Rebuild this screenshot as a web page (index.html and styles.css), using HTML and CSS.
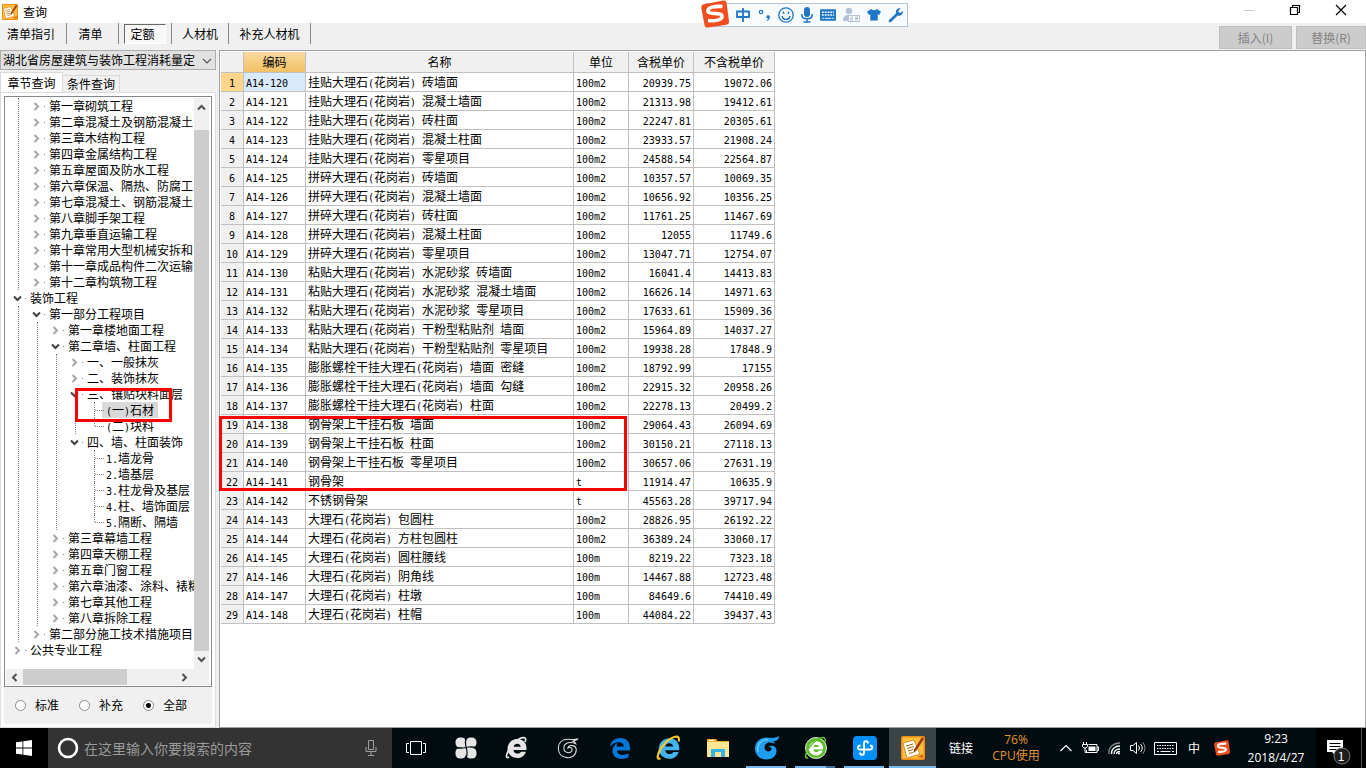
FILE: index.html
```html
<!DOCTYPE html>
<html lang="zh-CN">
<head>
<meta charset="utf-8">
<title>查询</title>
<link rel="stylesheet" href="styles.css">
</head>
<body>
<header class="titlebar">
  <svg class="app-icon" viewBox="0 0 24 24"><use href="#note"/></svg>
  <h1 class="title">查询</h1>
  <div class="window-buttons">
    <button class="win-btn" aria-label="最小化"><svg viewBox="0 0 12 12"><path d="M1 6.500h10" stroke="#c8c8c8" fill="none"/></svg></button>
    <button class="win-btn" aria-label="还原"><svg viewBox="0 0 12 12"><path d="M1.500 3.500h7v7h-7zM3.500 3v-1.500h7v7h-1.500" stroke="#000" stroke-width="1.200" fill="none"/></svg></button>
    <button class="win-btn" aria-label="关闭"><svg viewBox="0 0 12 12"><path d="M1 1l10 10M11 1L1 11" stroke="#000" stroke-width="1.200" fill="none"/></svg></button>
  </div>
</header>

<nav class="toolbar">
  <div class="modes">
    <button class="mode mode-wide">清单指引</button>
    <button class="mode mode-short">清单</button>
    <div class="mode-slot"><button class="mode-pressed">定额</button></div>
    <button class="mode mode-mid">人材机</button>
    <button class="mode mode-long">补充人材机</button>
  </div>
  <div class="actions">
    <button class="action" disabled>插入(I)</button>
    <button class="action" disabled>替换(R)</button>
  </div>
</nav>

<main class="workspace">
  <aside class="sidebar">
    <div class="combo">
      <select class="combo-select" aria-label="定额库"><option>湖北省房屋建筑与装饰工程消耗量定额</option></select>
      <svg class="combo-arrow" viewBox="0 0 10 6"><path d="M1 1l4 4 4-4" stroke="#555" stroke-width="1.200" fill="none"/></svg>
    </div>
    <div class="tabs">
      <button class="tab tab-active">章节查询</button>
      <button class="tab">条件查询</button>
    </div>
    <section class="tab-page">
      <div class="tree-box">
        <div class="tree-view"><ul class="tree" id="tree"></ul></div>
        <div class="vscroll">
          <svg class="arrow" viewBox="0 0 9 9"><path d="M1 6.500l3.500-3.500 3.500 3.500" class="arrow-path"/></svg>
          <div class="vthumb"></div>
          <svg class="arrow" viewBox="0 0 9 9"><path d="M1 2.500l3.500 3.500 3.500-3.500" class="arrow-path"/></svg>
        </div>
        <div class="hscroll">
          <svg class="arrow" viewBox="0 0 9 9"><path d="M6.500 1l-3.500 3.500 3.500 3.500" class="arrow-path"/></svg>
          <div class="htrack"><div class="hthumb"></div></div>
          <svg class="arrow" viewBox="0 0 9 9"><path d="M2.500 1l3.500 3.500-3.500 3.500" class="arrow-path"/></svg>
        </div>
      </div>
      <div class="filters">
        <label class="filter"><input type="radio" name="scope" class="radio">标准</label>
        <label class="filter"><input type="radio" name="scope" class="radio">补充</label>
        <label class="filter"><input type="radio" name="scope" class="radio" checked>全部</label>
      </div>
    </section>
    <div class="mark mark-tree"></div>
  </aside>

  <section class="grid-panel">
    <table class="grid">
      <colgroup><col class="c-no"><col class="c-code"><col class="c-name"><col class="c-unit"><col class="c-tax"><col class="c-net"></colgroup>
      <thead><tr><th></th><th class="sorted">编码</th><th>名称</th><th>单位</th><th>含税单价</th><th>不含税单价</th></tr></thead>
      <tbody id="rows"></tbody>
    </table>
    <div class="mark mark-rows"></div>
  </section>
</main>

<footer class="taskbar">
  <button class="start" aria-label="开始"><svg width="16" height="16" viewBox="0 0 16 16"><path fill="#fff" d="M0 2.300l6.500-.9v6.200H0zM7.300 1.300L16 0v7.600H7.300zM0 8.400h6.500v6.200L0 13.700zM7.300 8.400H16V16l-8.700-1.300z"/></svg></button>
  <label class="search">
    <svg width="22" height="22" viewBox="0 0 22 22"><circle cx="11" cy="11" r="9" fill="none" stroke="#fff" stroke-width="2.600"/></svg>
    <input class="search-input" type="text" placeholder="在这里输入你要搜索的内容">
    <svg width="12" height="18" viewBox="0 0 12 18"><path d="M3.500 1.500h5v9h-5zM1 8v4.500h10V8M6 12.500V16M3 16.500h6" stroke="#a0a0a0" fill="none"/></svg>
  </label>
  <div class="apps">
    <button class="app app-view" aria-label="任务视图"><svg width="20" height="14" viewBox="0 0 20 14"><path d="M4.500.5h11v13h-11zM3 2.500H.5v9H3M17 2.500h2.500v9H17" stroke="#fff" fill="none"/></svg></button>
    <button class="app app-gap" aria-label="花瓣"><svg width="22" height="22" viewBox="0 0 22 22"><g fill="#e6e6e6"><rect x=".5" y=".5" width="10.500" height="10" rx="4.500"/><rect x="11" y=".5" width="10.500" height="10" rx="4.500"/><rect x=".5" y="11" width="10.500" height="10.500" rx="4.500"/><rect x="11" y="11" width="10.500" height="10.500" rx="4.500"/><path d="M7 7h8v8H7z"/></g><path d="M11.500 0C10 3 10 6 11.200 10.500M22 11c-4-2-7-1.500-10.800-.5M10.500 22c2-3 2-7 .7-11.500M0 10c4 2 7 1.500 11.200.5" stroke="#000c10" stroke-width="1.200" fill="none"/></svg></button>
    <button class="app app-gap" aria-label="浏览器"><svg width="24" height="24" viewBox="0 0 24 24"><use href="#e-shape" fill="#e6e6e6"/><path d="M4 21C-1 24 2 14 9 7 15 1 23-1 20 6" fill="none" stroke="#e6e6e6" stroke-width="1.700"/></svg></button>
    <button class="app app-gap" aria-label="广联达"><svg width="22" height="22" viewBox="0 0 24 24"><use href="#swirl" fill="none" stroke="#ddd" stroke-width="1.200"/></svg></button>
    <span class="app-space"></span>
    <button class="app" aria-label="Edge"><svg width="22" height="22" viewBox="0 0 22 22"><path fill="#0078d7" d="M1 9.500C2 4 6 1 11.500 1 18 1 21 5.500 21 11v2.500H8c.3 5 7 5.500 11.500 2.800v4.200C13 23.500 3.500 22 3.500 14c0-4 2-6.500 5.500-8.200-1 1.200-1.300 2.300-1.500 3.700h7.200C15 4 6 3.500 1 9.500z"/></svg></button>
    <button class="app" aria-label="Internet Explorer"><svg width="26" height="26" viewBox="0 0 24 24"><use href="#e-shape" fill="#43b4ee"/><path d="M4 21.500C-1 24 2 14 9 7 15 1 23-1 21 6" fill="none" stroke="#fdc82d" stroke-width="2"/></svg></button>
    <button class="app" aria-label="文件资源管理器"><svg width="22" height="20" viewBox="0 0 22 20"><path fill="#e8b42f" d="M0 1h9l1.500 2H22v5H0z"/><path fill="#ffe694" d="M0 4h22v15H0z"/><path fill="#39b3e5" d="M4 11h14v8h-4v-5H8v5H4z"/><path fill="#fff" d="M2 2h5v1H2z"/></svg></button>
    <button class="app running" aria-label="广联达计价"><svg width="24" height="24" viewBox="0 0 24 24"><path fill="#1f9df0" d="M24 0c0 4-2.500 5.500-6 5 1 .6 1.800 1.500 2 2.700-5-2.700-10.500-1-10.500 4 0 4.500 7 5 7 1 0-1.500-1.500-2.200-3-2 3-2.200 8-.7 8 4.300 0 5-4.500 8.500-10 8.500C5 23.500 0 19 0 12.500 0 6 5 1.500 11 1.500c4.500 0 8 1.500 13-1.500z"/><path d="M3 16C1 9 6 3.500 13 3.800" stroke="#69c8fb" stroke-width="1.500" fill="none"/></svg></button>
    <button class="app running stacked" aria-label="360浏览器"><svg width="24" height="24" viewBox="0 0 24 24"><circle cx="12" cy="12" r="10.500" fill="#5dbb2d" stroke="#dff3d2"/><use href="#e-shape" fill="#fff" transform="translate(3 3) scale(.75)"/><path d="M4 21.500C-1 24 2 14 9 7 15 1 23-1 21 6" fill="none" stroke="#65c331" stroke-width="1.500"/></svg></button>
    <button class="app running" aria-label="云助手"><svg width="24" height="24" viewBox="0 0 24 24"><rect width="24" height="24" rx="4" fill="#0090f8"/><path d="M15 7.500c0-3-4-3-4 0v9c0 3-4 3-4 0M7.500 9.500c-3 0-3.500 4-.5 4h10c3 0 3-4 0-4" fill="none" stroke="#fff" stroke-width="1.900"/></svg></button>
    <button class="app app-current" aria-label="查询"><svg width="24" height="24" viewBox="0 0 24 24"><use href="#note"/></svg></button>
  </div>
  <div class="tray">
    <span class="link">链接</span>
    <div class="cpu"><span>76%</span><span>CPU使用</span></div>
    <div class="tray-icons">
      <span class="tray-item"><svg width="12" height="8" viewBox="0 0 12 8"><path d="M.5 7L6 1.500 11.500 7" stroke="#fff" stroke-width="1.200" fill="none"/></svg></span>
      <span class="tray-item"><svg width="17" height="12" viewBox="0 0 17 12"><path d="M6.500 2.500h8.500v8H4.500V8M15 5h1.500v3.500H15M1.500 0v2.500M4.500 0v2.500M.5 2.500h5v2l-1.500 1.500h-2L.5 4.500zM3 6v4.500h1.500" stroke="#fff" fill="none"/><path fill="#fff" d="M6.500 4.500h7v4.500h-7z"/></svg></span>
      <span class="tray-item"><svg width="14" height="14" viewBox="0 0 14 14"><path d="M2 13C1 7 6 2 13 2" stroke="#888" fill="none" stroke-width="1.300"/><path d="M4.500 13C4 8.500 8 5 13 5M7 13c0-3 2.500-5 6-5M9.500 13c0-1.500 1.500-2.500 3.500-2.500" stroke="#fff" fill="none" stroke-width="1.300"/><circle cx="12" cy="12.500" r="1" fill="#fff"/></svg></span>
      <span class="tray-item"><svg width="16" height="14" viewBox="0 0 16 14"><path d="M.5 4.500h2.500L6.500 1.500v11L3 9.500H.5zM8.500 4.500q2 2.500 0 5M10.500 3q3.500 4 0 8" stroke="#fff" fill="none"/><path d="M12.500 1q5 6 0 12" stroke="#888" fill="none"/></svg></span>
      <span class="tray-item tray-kbd"><svg width="23" height="13" viewBox="0 0 23 13"><path d="M.5.5h22v12H.5z" stroke="#fff" fill="none"/><path d="M3 3.500h17M3 6.500h17" stroke="#fff" stroke-dasharray="1.500 1" fill="none"/><path d="M3 9.500h2M6.500 9.500h10M18 9.500h2" stroke="#fff" fill="none"/></svg></span>
      <span class="tray-item tray-ime">中</span>
      <span class="tray-item tray-ime"><svg width="16" height="16" viewBox="0 0 28 28"><use href="#sogou"/></svg></span>
    </div>
    <div class="clock"><time>9:23</time><time>2018/4/27</time></div>
    <button class="notice" aria-label="通知"><svg width="24" height="26" viewBox="0 0 24 26"><path fill="#fff" d="M0 1h16v12h-7.500v3.500L5 13H0z"/><path d="M2.500 4.500h11M2.500 7.500h11M2.500 10.500h7" stroke="#000" fill="none"/><circle cx="15" cy="17" r="8" fill="#1e1e1e" stroke="#777"/></svg><span class="badge">1</span></button>
    <span class="show-desktop"></span>
  </div>
</footer>

<div class="ime">
  <svg class="ime-logo" viewBox="0 0 28 28"><use href="#sogou"/></svg>
  <svg width="16" height="16" viewBox="0 0 16 16"><path d="M2 4.500h12v5.500H2zM8 1v14" stroke="#1d76c6" stroke-width="1.800" fill="none"/></svg>
  <svg width="13" height="16" viewBox="0 0 13 16"><circle cx="3" cy="5" r="1.700" stroke="#1d76c6" fill="none" stroke-width="1.200"/><path d="M9 8.500c2-.8 3.500.5 2.700 2.500-.4 1.500-1.500 2.500-2.700 3l-.3-.8c.9-.4 1.400-1 1.400-1.700-1.600.2-2.300-1.800-1.100-3z" fill="#1d76c6"/></svg>
  <svg width="16" height="16" viewBox="0 0 16 16"><circle cx="8" cy="8" r="7.200" stroke="#1d76c6" stroke-width="1.300" fill="none"/><path d="M5.500 4.500v2.500M10.500 4.500v2.500M4 9c1 4.500 7 4.500 8 0" stroke="#1d76c6" stroke-width="1.400" fill="none"/></svg>
  <svg width="12" height="16" viewBox="0 0 12 16"><rect x="3" y="0" width="6" height="10" rx="3" fill="#1d76c6"/><path d="M.8 7v1c0 5 10.400 5 10.400 0V7M6 12v3M2.500 15h7" stroke="#1d76c6" stroke-width="1.500" fill="none"/></svg>
  <svg width="16" height="16" viewBox="0 0 17 16"><rect y="2" width="17" height="12" rx="1" fill="#1d76c6"/><path d="M2 5h13M2 8h13" stroke="#fff" stroke-width="1.500" stroke-dasharray="2 1"/><path d="M2 11.500h2M5 11.500h7M13 11.500h2" stroke="#fff"/></svg>
  <svg width="17" height="16" viewBox="0 0 17 16"><circle cx="6" cy="4" r="3.200" fill="#b4c1d6"/><path d="M0 14c0-5 2-6 6-6h3v6z" fill="#b4c1d6"/><path d="M5.500 8.500h11v6h-11z" fill="#fff" stroke="#b4c1d6"/><path d="M7.500 10h2v1.500h-2V13h2.500M12 10h2.500v3H12M12 11.500h2.500" stroke="#b4c1d6" fill="none"/></svg>
  <svg width="14" height="16" viewBox="0 0 15 16"><path d="M4.500 1.500q3 2.500 6 0L15 4.500 13 8l-1.500-.7V14h-8V7.300L2 8 0 4.500z" fill="#1d76c6"/></svg>
  <svg width="15" height="16" viewBox="0 0 15 16"><path d="M1 13l7-6.500C7 3 10 .5 12.700 1.500L10.300 4l.6 1.600 1.700.5L15 3.700C15.500 7.500 12.500 9.500 9.700 8.500L3 15c-1.500 1-3-.6-2-2z" fill="#1d76c6"/></svg>
</div>

<svg class="defs" width="0" height="0" aria-hidden="true">
  <symbol id="note" viewBox="0 0 24 24"><rect width="24" height="24" rx="2" fill="#ef8a12"/><rect x="1.500" y="1.500" width="21" height="21" fill="#fdbf3c"/><path d="M2 7l11-3 6 14-13 4z" fill="#fffdf0" stroke="#c96a08" stroke-width=".7"/><path d="M5 10l7-2M6 12.500l7-2M7 15l5-1.500M8 17.500l4-1" stroke="#a8691c" stroke-width="1"/><path d="M21 1l2 2-8 12-2.500 2 .5-3.500z" fill="#a43a0b"/><path d="M16 21l6-3v4z" fill="#e06a08"/></symbol>
  <symbol id="e-shape" viewBox="0 0 24 24"><path fill-rule="evenodd" d="M2.500 13C2.500 7 7 3 12.500 3 18 3 22 7 21.500 14H8.500c.5 4.500 6 4.500 7.500 1.700h5C19.500 20 16 22 12.500 22 7 22 2.500 18 2.500 13zM8.600 10.700h7.200c-.5-4-6.500-4-7.200 0z"/></symbol>
  <symbol id="swirl" viewBox="0 0 24 24"><path d="M23 2c-2.500 2-4 2-5.500 2.500 1.500.5 2.500 1.500 3 3-5-3-13-1.500-13 4.500 0 6 9 7 9 1.500 0-2-2.500-3-4.500-1.500 1-4 9-3.500 9 2C21 20 16 23 11 22.500 5 22 1.500 18 1.500 12.500 1.500 6 6 2.500 12 2.500c4 0 7 1 11-.5z"/></symbol>
  <symbol id="sogou" viewBox="0 0 28 28"><path d="M2 4.500L22 .5q3-.5 3.500 2L28 21q.5 3-2.500 3.700L7 27.500q-3 .5-3.500-2.500L.3 8Q0 5 2 4.500z" fill="#f04e1e"/><path d="M21.500 6.500C14 6 6 7 7 11.500c.7 3.500 13.500.5 14 4.500.4 4-7 5.500-14 4.500" fill="none" stroke="#fff" stroke-width="3.600"/></symbol>
</svg>
<script src="app.js"></script>
</body>
</html>
```

FILE: styles.css
```css
* { box-sizing: border-box; }
body {
  margin: 0;
  height: 100vh;
  display: flex;
  flex-direction: column;
  overflow: hidden;
  position: relative;
  background: #f0f0f0;
  color: #000;
  font-family: "Noto Sans CJK SC", sans-serif;
  font-size: 12px;
  line-height: 16px;
}
button, input, select { font: inherit; color: inherit; }
button { border: 0; padding: 0; background: none; }
svg { flex: none; }
ul { list-style: none; margin: 0; padding: 0; }
.defs { position: absolute; }
.latin { font-family: "DejaVu Sans Mono", monospace; font-size: 10px; line-height: 10px; }

/* Title bar */
.titlebar { display: flex; align-items: center; gap: 5px; height: 23px; padding-left: 2px; background: #fff; }
.app-icon { width: 16px; height: 16px; }
.title { margin: 0; font-size: 12px; font-weight: 400; }
.window-buttons { display: flex; margin: 0 2px 3px auto; }
.win-btn { width: 46px; height: 20px; display: grid; place-items: center; }
.win-btn svg { width: 12px; height: 12px; }

/* Toolbar */
.toolbar { display: flex; justify-content: space-between; height: 27px; }
.modes { display: flex; height: 21px; }
.mode, .mode-slot { border-right: 1px solid #888; white-space: nowrap; }
.mode-wide { width: 67px; padding-right: 4px; }
.mode-short { width: 52px; padding-right: 4px; }
.mode-mid { width: 57px; }
.mode-long { width: 82px; }
.mode-slot { width: 53px; padding: 1px 5px 0; }
.mode-pressed {
  width: 42px;
  height: 20px;
  padding-right: 5px;
  border: 1px solid #fff;
  border-top-color: #696969;
  border-left-color: #696969;
  background: #f8f8f8;
}
.actions { display: flex; gap: 4px; padding-top: 3px; }
.action { width: 73px; height: 23px; border: 1px solid #bfbfbf; background: #ccc; color: #838383; }
.action:last-child { width: 70px; }

/* Workspace */
.workspace { flex: 1; min-height: 0; display: flex; }
.sidebar { position: relative; width: 219px; padding-right: 3px; display: flex; flex-direction: column; }
.combo { position: relative; }
.combo-select {
  display: block;
  width: 100%;
  height: 20px;
  padding: 0 20px 0 2px;
  border: 1px solid #adadad;
  border-radius: 0;
  appearance: none;
  background: #e1e1e1;
  overflow: hidden;
}
.combo-arrow { position: absolute; right: 4px; top: 8px; width: 10px; height: 6px; }
.tabs { display: flex; align-items: flex-end; height: 22px; padding-top: 2px; }
.tab { width: 57px; height: 17px; border: 1px solid #d9d9d9; border-width: 1px 1px 0 0; white-space: nowrap; line-height: 16px; }
.tab-active { width: 63px; height: 20px; background: #fff; border-left-width: 1px; line-height: 18px; }
.tab-page {
  flex: 1;
  min-height: 0;
  display: flex;
  flex-direction: column;
  width: 216px;
  border: 1px solid #dcdcdc;
  border-bottom-width: 2px;
  outline: 3px solid #fff;
  outline-offset: -4px;
  padding: 3px;
}
.tree-box {
  flex: 1;
  min-height: 0;
  display: grid;
  grid-template: 1fr 16px / 1fr 15px;
  border: 1px solid #828790;
  padding: 1px 2px 1px 1px;
  background: #fff;
}
.tree-view { overflow: hidden; min-width: 0; }
.tree ul { margin-left: 12px; border-left: 1px dotted #808080; padding-left: 6px; }
.tree li:last-child > ul { border-left-color: transparent; }
.node { display: flex; align-items: center; height: 16px; white-space: nowrap; }
.toggle { position: relative; width: 24px; height: 16px; flex: none; }
.toggle svg { display: block; margin: 4px 0 0 7px; width: 9px; height: 9px; }
.toggle path { fill: none; stroke: #a6a6a6; stroke-width: 2; }
.open > .node path { stroke: #404040; }
.toggle::after { content: ""; position: absolute; right: 4px; top: 8px; width: 1px; height: 1px; background: #808080; }
.leaf .toggle::before { content: ""; position: absolute; left: 12px; top: 0; height: 100%; border-left: 1px dotted #808080; }
.leaf:last-child .toggle::before { height: 8px; }
.leaf .toggle::after { left: 13px; right: 2px; width: auto; height: 0; background: none; border-top: 1px dotted #808080; }
.chosen .caption { background: #d9d9d9; box-shadow: -4px 0 #d9d9d9, 4px 0 #d9d9d9; }
.vscroll { display: flex; flex-direction: column; align-items: center; background: #f0f0f0; padding: 5px 0; }
.vthumb { flex: 1; align-self: stretch; margin: 18px 0 4px; background: #cdcdcd; }
.arrow { width: 9px; height: 9px; }
.arrow-path { fill: none; stroke: #505050; stroke-width: 2; }
.hscroll { grid-column: 1 / -1; display: flex; align-items: center; background: #f0f0f0; padding: 0 20px 0 4px; }
.htrack { flex: 1; align-self: stretch; margin: 0 4px; }
.hthumb { width: 68%; height: 100%; background: #cdcdcd; }
.filters { display: flex; height: 36px; padding-left: 11px; align-items: center; }
.filter { display: flex; align-items: center; gap: 9px; width: 64px; }
.radio { appearance: none; width: 11px; height: 11px; margin: 0; border: 1px solid #8a8a8a; border-radius: 50%; background: #fff; }
.radio:checked { background: radial-gradient(circle, #000 0 2px, #fff 3px); }

/* Quota grid */
.grid-panel { position: relative; flex: 1; min-width: 0; border: 1px solid #a0a0a8; padding: 1px; background: #fff; }
.grid { width: 554px; table-layout: fixed; border-collapse: separate; border-spacing: 0; }
.c-no { width: 23px; }
.c-code { width: 62px; }
.c-name { width: 268px; }
.c-unit { width: 55px; }
.c-tax { width: 65px; }
.c-net { width: 81px; }
.grid th, .grid td {
  height: 19px;
  padding: 0 2px;
  border: 0 solid #c0c0c0;
  border-width: 0 1px 1px 0;
  line-height: 18px;
  font-weight: 400;
  white-space: nowrap;
}
.grid thead th { height: 21px; background: #f0f0f0; line-height: 20px; }
.grid thead .sorted { background: linear-gradient(#f9dba0, #f1c063); }
.grid tbody th { background: #f0f0f0; }
.grid .num { text-align: right; }
.grid .current th { background: #ffd58c; }
.grid .current .code { background: #d9eafa; }

/* Highlight frames */
.mark { position: absolute; border: 3px solid #f00; pointer-events: none; }
.mark-tree { left: 75px; top: 338px; width: 97px; height: 34px; }
.mark-rows { left: -1px; top: 365px; width: 408px; height: 75px; }

/* Input method bar */
.ime {
  position: absolute;
  left: 705px;
  top: 3px;
  height: 24px;
  display: flex;
  align-items: center;
  gap: 7px;
  padding: 0 4px 0 29px;
  border: 1px solid #b4c4d6;
  background: #f8fbfe;
}
.ime-logo { position: absolute; left: -5px; top: -4px; width: 28px; height: 28px; }

/* Taskbar */
.taskbar { display: flex; height: 40px; background: #000c10; color: #fff; }
.start { width: 48px; background: #000; display: grid; place-items: center; }
.search { display: flex; align-items: center; gap: 5px; width: 344px; padding: 0 15px 0 9px; background: #333; }
.search-input { flex: 1; min-width: 0; height: 24px; padding: 0; border: 0; background: none; font-size: 14px; }
.search-input::placeholder { color: #9a9a9a; opacity: 1; }
.apps { display: flex; }
.app { width: 49px; display: grid; place-items: center; }
.app-view { width: 48px; }
.app-gap { width: 51px; }
.app-space { width: 2px; }
.running { background: linear-gradient(#76b9ed, #76b9ed) 4px 100% / 40px 2px no-repeat; }
.stacked { background: linear-gradient(90deg, #76b9ed 31px, #3f719a 31px) 4px 100% / 40px 2px no-repeat; }
.app-current { width: 47px; background: linear-gradient(#3a4446 38px, #76b9ed 38px); }
.tray { display: flex; align-items: stretch; margin-left: auto; }
.link { width: 50px; text-align: center; line-height: 40px; }
.cpu { width: 60px; padding-top: 4px; display: flex; flex-direction: column; text-align: center; color: #e8932c; }
.tray-icons { display: flex; padding-left: 8px; }
.tray-item { width: 24px; display: grid; place-items: center; }
.tray-kbd { width: 30px; }
.tray-ime { width: 28px; }
.clock { width: 80px; padding-top: 1px; display: flex; flex-direction: column; text-align: center; line-height: 19px; }
.notice { position: relative; width: 45px; display: grid; place-items: center; background: #000; }
.notice svg { margin-top: 8px; }
.badge { position: absolute; left: 17px; top: 20px; width: 16px; text-align: center; line-height: 16px; color: #fff; }
.show-desktop { width: 5px; border-left: 1px solid #555; background: #000; }
.cpu, .clock { font-family: "Open Sans", "Noto Sans CJK SC", sans-serif; }
```

FILE: app.js
```javascript
const latin = s => s.replace(/[\x20-\x7e]+/g, m => `<span class="latin">${m}</span>`);

const quotas = `挂贴大理石(花岗岩) 砖墙面|100m2|20939.75|19072.06
挂贴大理石(花岗岩) 混凝土墙面|100m2|21313.98|19412.61
挂贴大理石(花岗岩) 砖柱面|100m2|22247.81|20305.61
挂贴大理石(花岗岩) 混凝土柱面|100m2|23933.57|21908.24
挂贴大理石(花岗岩) 零星项目|100m2|24588.54|22564.87
拼碎大理石(花岗岩) 砖墙面|100m2|10357.57|10069.35
拼碎大理石(花岗岩) 混凝土墙面|100m2|10656.92|10356.25
拼碎大理石(花岗岩) 砖柱面|100m2|11761.25|11467.69
拼碎大理石(花岗岩) 混凝土柱面|100m2|12055|11749.6
拼碎大理石(花岗岩) 零星项目|100m2|13047.71|12754.07
粘贴大理石(花岗岩) 水泥砂浆 砖墙面|100m2|16041.4|14413.83
粘贴大理石(花岗岩) 水泥砂浆 混凝土墙面|100m2|16626.14|14971.63
粘贴大理石(花岗岩) 水泥砂浆 零星项目|100m2|17633.61|15909.36
粘贴大理石(花岗岩) 干粉型粘贴剂 墙面|100m2|15964.89|14037.27
粘贴大理石(花岗岩) 干粉型粘贴剂 零星项目|100m2|19938.28|17848.9
膨胀螺栓干挂大理石(花岗岩) 墙面 密缝|100m2|18792.99|17155
膨胀螺栓干挂大理石(花岗岩) 墙面 勾缝|100m2|22915.32|20958.26
膨胀螺栓干挂大理石(花岗岩) 柱面|100m2|22278.13|20499.2
钢骨架上干挂石板 墙面|100m2|29064.43|26094.69
钢骨架上干挂石板 柱面|100m2|30150.21|27118.13
钢骨架上干挂石板 零星项目|100m2|30657.06|27631.19
钢骨架|t|11914.47|10635.9
不锈钢骨架|t|45563.28|39717.94
大理石(花岗岩) 包圆柱|100m2|28826.95|26192.22
大理石(花岗岩) 方柱包圆柱|100m2|36389.24|33060.17
大理石(花岗岩) 圆柱腰线|100m|8219.22|7323.18
大理石(花岗岩) 阴角线|100m|14467.88|12723.48
大理石(花岗岩) 柱墩|100m|84649.6|74410.49
大理石(花岗岩) 柱帽|100m|44084.22|39437.43`.split("\n").map(r => r.split("|"));

document.getElementById("rows").innerHTML = quotas.map(([name, unit, tax, net], i) =>
  `<tr${i ? "" : ' class="current"'}><th>${latin(String(i + 1))}</th><td class="code">${latin("A14-" + (120 + i))}</td>` +
  `<td>${latin(name)}</td><td>${latin(unit)}</td><td class="num">${latin(tax)}</td><td class="num">${latin(net)}</td></tr>`
).join("");

const chapters = [
  { kids: ["第一章砌筑工程", "第二章混凝土及钢筋混凝土", "第三章木结构工程", "第四章金属结构工程", "第五章屋面及防水工程",
    "第六章保温、隔热、防腐工", "第七章混凝土、钢筋混凝土", "第八章脚手架工程", "第九章垂直运输工程",
    "第十章常用大型机械安拆和", "第十一章成品构件二次运输", "第十二章构筑物工程"] },
  { name: "装饰工程", kids: [
    { name: "第一部分工程项目", kids: [
      "第一章楼地面工程",
      { name: "第二章墙、柱面工程", kids: [
        "一、一般抹灰", "二、装饰抹灰",
        { name: "三、镶贴块料面层", leaves: ["(一)石材", "(二)块料"] },
        { name: "四、墙、柱面装饰", leaves: ["1.墙龙骨", "2.墙基层", "3.柱龙骨及基层", "4.柱、墙饰面层", "5.隔断、隔墙"] }
      ] },
      "第三章幕墙工程", "第四章天棚工程", "第五章门窗工程", "第六章油漆、涂料、裱糊工程", "第七章其他工程", "第八章拆除工程"
    ] },
    "第二部分施工技术措施项目"
  ] },
  "公共专业工程"
];

const closed = '<svg viewBox="0 0 9 9"><path d="M2.500 1L6 4.500 2.500 8"/></svg>';
const opened = '<svg viewBox="0 0 9 9"><path d="M1 2.500L4.500 6 8 2.500"/></svg>';
const row = (icon, text) => `<div class="node"><span class="toggle">${icon}</span><span class="caption">${latin(text)}</span></div>`;

function branch(item) {
  if (typeof item === "string") return `<li>${row(closed, item)}</li>`;
  const head = item.name ? row(opened, item.name) : "";
  const body = item.leaves
    ? `<ul>${item.leaves.map(t => `<li class="leaf${t === "(一)石材" ? " chosen" : ""}">${row("", t)}</li>`).join("")}</ul>`
    : `<ul>${item.kids.map(branch).join("")}</ul>`;
  return `<li class="open">${head}${body}</li>`;
}

document.getElementById("tree").innerHTML = chapters.map(branch).join("");
```
